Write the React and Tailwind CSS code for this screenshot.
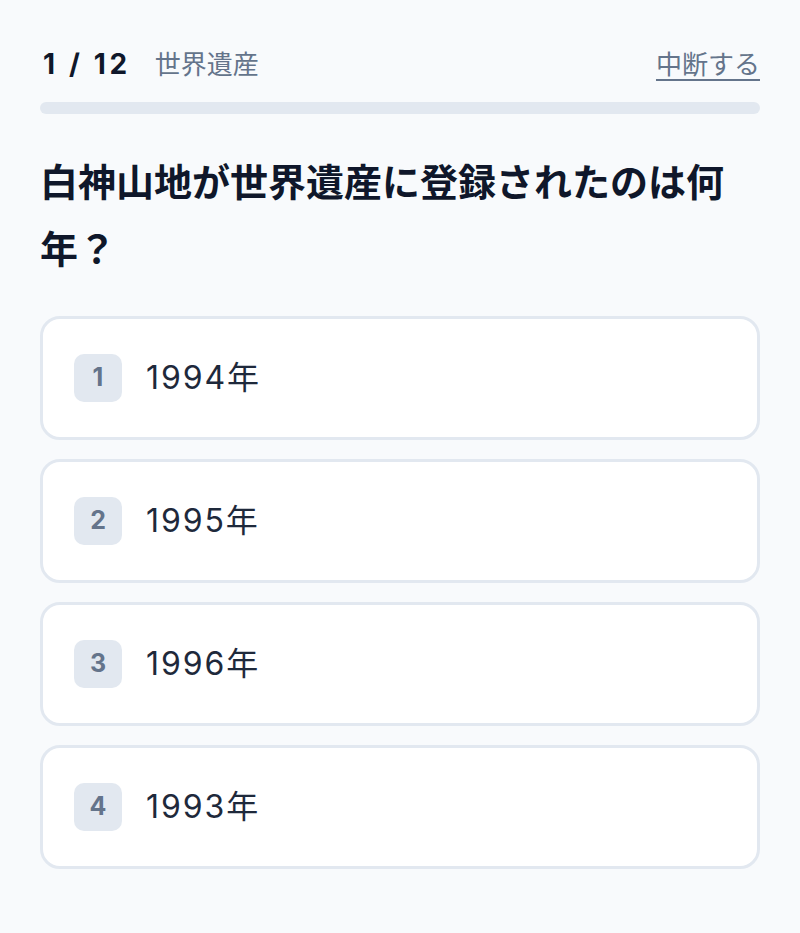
import React from "react";

const options = ["1994年", "1995年", "1996年", "1993年"];

export default function App() {
  return (
    <div
      className="min-h-screen bg-[#f8fafc] px-10 pt-[44px] pb-16"
      style={{ fontFamily: 'Inter, "Noto Sans CJK JP", sans-serif' }}
    >
      <div className="flex h-[40px] items-center justify-between">
        <div className="flex items-center gap-[24px]">
          <span className="pl-[3px] text-[28px] font-bold tracking-[0.13em] text-[#0f172a]">1 / 12</span>
          <span className="text-[26px] text-[#64748b]">世界遺産</span>
        </div>
        <button className="text-[26px] text-[#64748b] underline underline-offset-[5px]">中断する</button>
      </div>
      <div className="mt-[18px] h-3 w-full rounded-full bg-[#e2e8f0]">
        <div className="h-full w-0 rounded-full bg-[#3b82f6]" />
      </div>
      <h1 className="mt-[35px] text-[38px] font-bold leading-[1.75] text-[#0f172a]">
        白神山地が世界遺産に登録されたのは何年？
      </h1>
      <div className="mt-[34px] flex flex-col gap-[19px]">
        {options.map((o, i) => (
          <button
            key={o}
            className="flex h-[124px] w-full items-center gap-6 rounded-[20px] border-[3px] border-[#e2e8f0] bg-white pl-[31px] text-left"
          >
            <span className="flex h-12 w-12 items-center justify-center rounded-[10px] bg-[#e2e8f0] text-[25px] font-bold text-[#64748b]">
              {i + 1}
            </span>
            <span className="text-[32px] tracking-[0.06em] text-[#1e293b]">{o}</span>
          </button>
        ))}
      </div>
    </div>
  );
}
